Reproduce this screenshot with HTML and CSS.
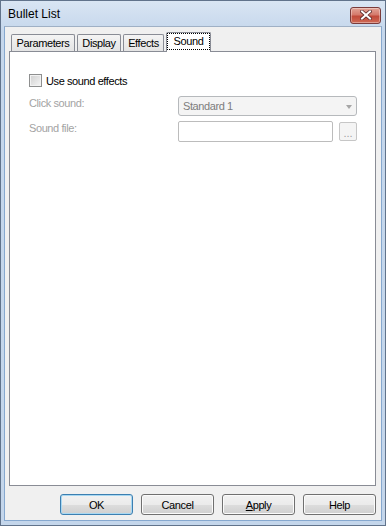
FILE: index.html
```html
<!DOCTYPE html>
<html lang="en">
<head>
  <meta charset="UTF-8">
  <title>Bullet List</title>
  <link rel="stylesheet" href="styles.css">
</head>
<body>
<div class="window">
  <div class="titlebar">
    <span class="title">Bullet List</span>
    <button class="close-btn" title="Close">
      <svg width="12" height="10" viewBox="0 0 12 10">
        <path d="M2 1.5 L10 8.5 M10 1.5 L2 8.5" stroke="#5a2a2a" stroke-width="3.6" stroke-linecap="square"/>
        <path d="M2 1.5 L10 8.5 M10 1.5 L2 8.5" stroke="#fff" stroke-width="2" stroke-linecap="square"/>
      </svg>
    </button>
  </div>
  <div class="client">
    <div class="tabs">
      <div class="tab tab-params">Parameters</div>
      <div class="tab tab-display">Display</div>
      <div class="tab tab-effects">Effects</div>
      <div class="tab tab-sound active"><span class="focus">Sound</span></div>
    </div>
    <div class="panel">
      <label class="check-row">
        <span class="checkbox"></span>
        <span>Use sound effects</span>
      </label>
      <div class="form-grid">
        <div class="field-label">Click sound:</div>
        <div class="select">
          <span>Standard 1</span>
          <span class="arrow"></span>
        </div>
        <div class="field-label">Sound file:</div>
        <div class="file-row">
          <div class="text-input"></div>
          <div class="browse-btn">...</div>
        </div>
      </div>
    </div>
    <div class="buttons">
      <button class="btn btn-default">OK</button>
      <button class="btn">Cancel</button>
      <button class="btn"><u>A</u>pply</button>
      <button class="btn">Help</button>
    </div>
  </div>
</div>
</body>
</html>
```

FILE: styles.css
```css
html, body {
  margin: 0;
  padding: 0;
  background: #fff;
}
body {
  font-family: 'Liberation Sans', Arial, sans-serif;
  font-size: 11px;
  letter-spacing: -0.4px;
  color: #000;
}
.window {
  width: 386px;
  height: 526px;
  box-sizing: border-box;
  border: 1px solid #61738b;
  background: linear-gradient(#d9e5f3 0, #c5d7ec 30px, #c4d6eb 100%);
  padding: 0 3px 4px 3px;
  display: flex;
  flex-direction: column;
}
.titlebar {
  height: 25px;
  display: flex;
  align-items: center;
  justify-content: space-between;
  padding-left: 4px;
}
.title {
  font-size: 12px;
  letter-spacing: 0;
  color: #000;
  margin-top: 1px;
}
.close-btn {
  width: 31px;
  height: 17px;
  margin-top: 3px;
  margin-right: 1px;
  padding: 0;
  border: 1px solid #7a3b3b;
  border-radius: 3px;
  background: linear-gradient(#e2a497 0, #d57a6c 45%, #c14a3a 55%, #cf6a55 100%);
  box-shadow: inset 0 0 0 1px rgba(255,255,255,.35);
  display: flex;
  align-items: center;
  justify-content: center;
}
.client {
  flex: 1;
  background: #f0f0f0;
  border: 1px solid #86a8cf;
  border-top-color: #9fb0c5;
  padding: 5px 5px 5px 4px;
  display: flex;
  flex-direction: column;
}

/* tabs */
.tabs {
  display: flex;
  align-items: flex-end;
  height: 19px;
  padding-left: 2px;
  position: relative;
  z-index: 2;
}
.tab {
  box-sizing: border-box;
  height: 17px;
  margin-right: 2px;
  border: 1px solid #898c95;
  border-bottom: none;
  border-radius: 2px 2px 0 0;
  background: linear-gradient(#f4f4f4, #e4e4e4);
  text-align: center;
  line-height: 16px;
}
.tab-params { width: 64px; }
.tab-display { width: 44px; }
.tab-effects { width: 41px; }
.tab.active {
  width: 45px;
  height: 20px;
  margin-bottom: -1px;
  background: #fff;
  line-height: 15px;
}
.focus {
  display: block;
  height: 15px;
  border: 1px dotted #000;
  border-bottom-width: 1px;
}

/* panel */
.panel {
  flex: 1;
  background: #fff;
  border: 1px solid #898c95;
  padding: 22px 18px 0 19px;
}
.check-row {
  display: flex;
  align-items: center;
  height: 13px;
  gap: 4px;
}
.checkbox {
  box-sizing: border-box;
  width: 13px;
  height: 13px;
  border: 1px solid #8e8f8f;
  background: linear-gradient(135deg, #cfcfcf 0, #e6e6e6 60%, #f6f6f6 100%);
  box-shadow: inset 0 0 0 1px #f2f2f2;
}
.form-grid {
  display: grid;
  grid-template-columns: 149px 179px;
  row-gap: 5px;
  margin-top: 9px;
}
.field-label {
  color: #a3a3a3;
  line-height: 13px;
  padding-top: 1px;
}
.select {
  box-sizing: border-box;
  height: 20px;
  border: 1px solid #b6b9bc;
  border-radius: 3px;
  background: #f4f4f4;
  color: #7d7d7d;
  display: flex;
  align-items: center;
  justify-content: space-between;
  padding: 0 4px 0 4px;
}
.arrow {
  width: 0;
  height: 0;
  border-left: 3.5px solid transparent;
  border-right: 3.5px solid transparent;
  border-top: 4px solid #a6a6a6;
  margin-top: 1px;
}
.file-row {
  display: flex;
  align-items: flex-start;
}
.text-input {
  box-sizing: border-box;
  width: 155px;
  height: 21px;
  border: 1px solid #bcbcbc;
  border-radius: 2px;
  background: #fff;
}
.browse-btn {
  box-sizing: border-box;
  width: 18px;
  height: 19px;
  margin: 1px 0 0 6px;
  border: 1px solid #c6c6c6;
  border-radius: 2px;
  background: #f4f4f4;
  color: #a0a0a0;
  text-align: center;
  line-height: 20px;
  letter-spacing: 0;
}

/* dialog buttons */
.buttons {
  display: flex;
  justify-content: flex-end;
  gap: 8px;
  margin-top: 8px;
}
.btn {
  box-sizing: border-box;
  width: 73px;
  height: 21px;
  padding: 0;
  border: 1px solid #707070;
  border-radius: 3px;
  background: linear-gradient(#f2f2f2 0, #ebebeb 50%, #dddddd 51%, #cfcfcf 100%);
  box-shadow: inset 0 0 0 1px #fbfbfb;
  font-family: 'Liberation Sans', Arial, sans-serif;
  font-size: 11px;
  letter-spacing: -0.4px;
  color: #000;
}
.btn-default {
  border-color: #3c7fb1;
  box-shadow: inset 0 0 0 1px #a8d8f2;
}
```
